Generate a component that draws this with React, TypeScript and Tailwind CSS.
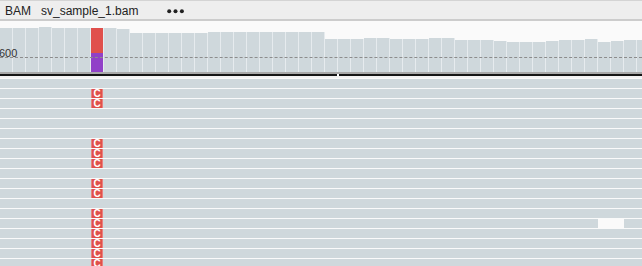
import React from "react";

const tops = [
  28, 28, 28, 27, 28, 28, 28, 28, 28, 29, 33, 33, 33, 33, 33, 33, 32, 32, 32, 32,
  32, 32, 32, 32, 32, 39, 39, 39, 38, 38, 39, 39, 39, 38, 38, 40, 40, 40, 41, 42,
  42, 42, 41, 40, 40, 39, 42, 41, 40, 40,
];

const cRows = new Set([1, 2, 6, 7, 8, 10, 11, 13, 14, 15, 16, 17, 18]);

function Bar({ top, idx }: { top: number; idx: number }) {
  const h = 72 - top;
  if (idx === 7) {
    return (
      <div className="flex w-[13px] shrink-0 flex-col border-r border-[#e6ebee]" style={{ height: h }}>
        <div className="h-[25px] bg-[#e0504c]" />
        <div className="flex-1 bg-[#9141c8]" />
      </div>
    );
  }
  return <div className="w-[13px] shrink-0 border-r border-[#e6ebee] bg-[#cfd8dc]" style={{ height: h }} />;
}

function Row({ k }: { k: number }) {
  return (
    <div className="relative mt-[1px] flex h-[9px] shrink-0 bg-[#cfd8dc]">
      {cRows.has(k) && (
        <div className="ml-[91px] flex h-[9px] w-[12px] items-center justify-center border-x border-[#e8807c] bg-[#e0504c] text-[10px] font-bold leading-none text-white">
          C
        </div>
      )}
      {k === 14 && <div className="absolute left-[598px] top-0 h-[9px] w-[26px] bg-[#fafafa]" />}
    </div>
  );
}

export default function App() {
  return (
    <div className="h-[266px] w-[642px] overflow-hidden bg-[#fafafa] font-['Liberation_Sans',Arial,sans-serif]">
      <div className="flex h-[21px] items-start border-t border-[#d4d4d4] border-b-2 border-b-[#cccccc] bg-[#eeeeee] text-[12px] text-[#222]">
        <span className="ml-[5px] mt-[3px] leading-[14px]">BAM</span>
        <span className="ml-[10px] mt-[3px] leading-[14px]">sv_sample_1.bam</span>
        <svg className="ml-[28px] mt-[8px]" width="20" height="5" viewBox="0 0 20 5">
          <circle cx="3.2" cy="2.2" r="2" fill="#222" />
          <circle cx="9.5" cy="2.2" r="2" fill="#222" />
          <circle cx="15.9" cy="2.2" r="2" fill="#222" />
        </svg>
      </div>
      <div className="relative h-[51px] bg-[#fafafa]">
        <div className="flex h-full items-end">
          {tops.map((t, i) => (
            <Bar key={i} top={t} idx={i} />
          ))}
        </div>
        <div className="absolute left-0 right-0 top-[36px] border-t border-dashed border-[#8c8c8c]" />
        <span className="absolute left-[-1px] top-[26px] text-[11px] leading-[12px] text-[#333]">600</span>
      </div>
      <div className="h-[2px] bg-[#a8a8a8]" />
      <div className="flex h-[2px]">
        <div className="w-[337px] bg-[#151515]" />
        <div className="w-[2px] bg-white" />
        <div className="flex-1 bg-[#151515]" />
      </div>
      <div className="h-[2px] bg-[#f2f2f2]" />
      <div className="flex flex-col bg-[#fafafa]">
        {Array.from({ length: 19 }).map((_, k) => (
          <Row key={k} k={k} />
        ))}
      </div>
    </div>
  );
}
